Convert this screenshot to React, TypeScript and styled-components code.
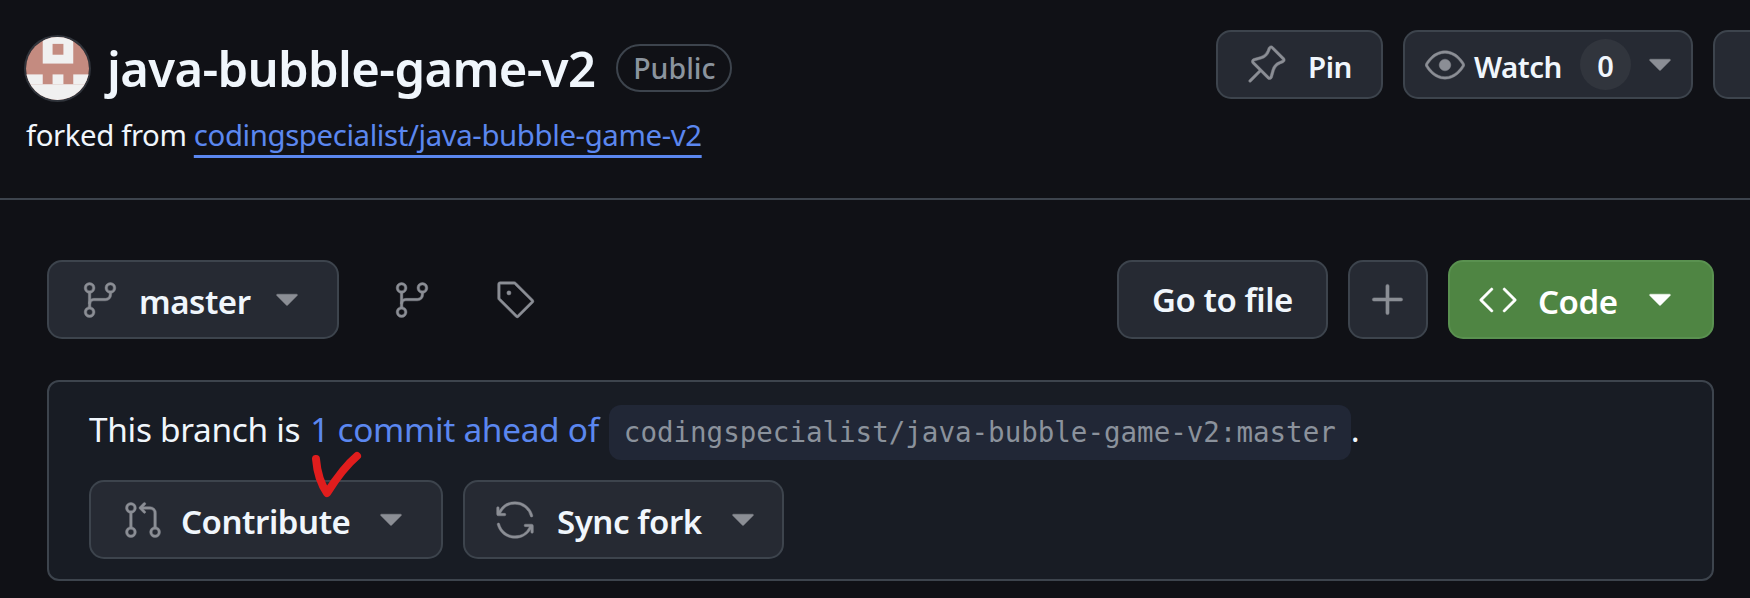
import React, { FC, ReactNode } from 'react'
import styled, { createGlobalStyle } from 'styled-components'
import {
  GoCode,
  GoEye,
  GoGitBranch,
  GoGitPullRequest,
  GoPin,
  GoPlus,
  GoSync,
  GoTag,
  GoTriangleDown,
} from 'react-icons/go'

const GlobalStyle = createGlobalStyle`
  html, body {
    margin: 0;
    padding: 0;
    width: 1750px;
    height: 598px;
    overflow: hidden;
    background: #101116;
  }
  body {
    font-family: "Noto Sans", "Liberation Sans", sans-serif;
    color: #f0f6fc;
  }
`

const Page = styled.div`
  width: 1750px;
  height: 598px;
  overflow: hidden;
`
const Header = styled.header`
  box-sizing: border-box;
  height: 200px;
  padding: 30px 0 0 26px;
  display: flex;
  justify-content: space-between;
  align-items: flex-start;
  border-bottom: 2px solid #3d444d;
`
const TitleBlock = styled.div`
  display: flex;
  flex-direction: column;
  gap: 12px;
  margin-top: 3px;
`
const TitleRow = styled.div`
  display: flex;
  align-items: center;
  height: 70px;
`
const Avatar = styled.svg`
  width: 63px;
  height: 63px;
  border-radius: 50%;
  box-shadow: 0 0 0 2px #30343b;
  margin-right: 18px;
`
const RepoName = styled.h1`
  margin: 0;
  font-size: 49px;
  font-weight: 600;
  letter-spacing: -0.65px;
  line-height: 70px;
  color: #f0f6fc;
`
const Visibility = styled.span`
  box-sizing: border-box;
  width: 116px;
  height: 48px;
  margin-left: 21px;
  display: flex;
  align-items: center;
  justify-content: center;
  border: 2px solid #3d444d;
  border-radius: 24px;
  font-size: 28.5px;
  font-weight: 500;
  color: #8b949e;
`
const ForkLine = styled.div`
  font-size: 29.4px;
  line-height: 40px;
  letter-spacing: -0.4px;
  color: #f0f6fc;
`
const Link = styled.a`
  color: #5b87ef;
  text-decoration: underline;
  text-decoration-thickness: 2.5px;
  text-decoration-skip-ink: none;
  text-underline-offset: 9px;
`
const HeaderActions = styled.div`
  display: flex;
  gap: 20px;
  flex-shrink: 0;
  width: 534px;
`
const Button = styled.button<{ $width: number; $pad?: number; $primary?: boolean }>`
  box-sizing: border-box;
  flex-shrink: 0;
  width: ${({ $width }) => $width}px;
  height: 69px;
  padding: 0 0 0 ${({ $pad = 0 }) => $pad}px;
  display: flex;
  align-items: center;
  border-radius: 15px;
  border: 2px solid ${({ $primary }) => ($primary ? '#5a9150' : '#3d444d')};
  background: ${({ $primary }) => ($primary ? '#4f8543' : '#262a33')};
  color: ${({ $primary }) => ($primary ? '#ffffff' : '#f0f6fc')};
  font-family: inherit;
  font-size: 29.5px;
  font-weight: 600;
  letter-spacing: -0.5px;
  white-space: nowrap;

  svg {
    flex-shrink: 0;
    color: ${({ $primary }) => ($primary ? '#ffffff' : '#8b8e95')};
    stroke: currentColor;
    stroke-width: 0.25;
  }
`
const TallButton = styled(Button)`
  height: 79px;
  font-size: 33px;
  letter-spacing: -0.45px;
`
const CenteredButton = styled(TallButton)`
  justify-content: center;
  padding: 0;
`
const Counter = styled.span`
  width: 51px;
  height: 50px;
  margin-left: 18px;
  border-radius: 50%;
  background: #31353d;
  display: flex;
  align-items: center;
  justify-content: center;
  font-size: 29px;
  padding-top: 1px;
`
const Label = styled.span<{ $left: number; $right: number }>`
  margin-left: ${({ $left }) => $left}px;
  margin-right: ${({ $right }) => $right}px;
  padding-top: 3px;
`
const MirroredPin = styled(GoPin)`
  transform: scaleX(-1);
`
const Toolbar = styled.div`
  box-sizing: border-box;
  height: 180px;
  padding: 60px 36px 0 47px;
  display: flex;
  align-items: flex-start;
  justify-content: space-between;
`
const ToolbarGroup = styled.div`
  display: flex;
  align-items: center;
`
const RightGroup = styled(ToolbarGroup)`
  gap: 20px;
`
const IconLink = styled.a<{ $left: number }>`
  margin-left: ${({ $left }) => $left}px;
  display: flex;
  color: #8b8e95;

  svg {
    stroke: currentColor;
    stroke-width: 0.25;
  }
`
const Panel = styled.section`
  box-sizing: border-box;
  width: 1667px;
  height: 201px;
  margin-left: 47px;
  padding: 23px 40px 0;
  background: #181c24;
  border: 2px solid #3d444d;
  border-radius: 12px;
`
const AheadLine = styled.div`
  height: 55px;
  display: flex;
  align-items: flex-start;
  font-size: 33.4px;
  line-height: 49px;
  letter-spacing: -0.3px;
  white-space: nowrap;
  color: #f0f6fc;
`
const AheadLink = styled.a`
  margin: 0 10px;
  color: #5b87ef;
`
const Ref = styled.code`
  box-sizing: border-box;
  height: 55px;
  padding: 0 15px;
  display: flex;
  align-items: center;
  background: #212736;
  border-radius: 12px;
  font-family: "DejaVu Sans Mono", "Liberation Mono", monospace;
  font-size: 27.5px;
  letter-spacing: 0;
  color: #8b929c;
`
const PanelActions = styled.div`
  position: relative;
  display: flex;
  gap: 20px;
  margin-top: 20px;
`
const CheckMark = styled.svg`
  position: absolute;
  left: 216px;
  top: -29px;
  width: 60px;
  height: 50px;
`

const Caret: FC<{ left: number }> = ({ left }) => (
  <GoTriangleDown size={40} style={{ marginLeft: left }} />
)

const Identicon: FC = () => (
  <Avatar viewBox="0 0 64 64">
    <rect width="64" height="64" fill="#c48b80" />
    <rect x="17" width="31" height="27" fill="#f0f0f0" />
    <rect x="27" y="7" width="11" height="11" fill="#c48b80" />
    <rect y="38" width="17" height="10" fill="#f0f0f0" />
    <rect x="27" y="38" width="11" height="10" fill="#f0f0f0" />
    <rect x="48" y="38" width="16" height="10" fill="#f0f0f0" />
    <rect y="48" width="64" height="16" fill="#f0f0f0" />
  </Avatar>
)

type ActionProps = { icon: ReactNode; width: number; pad: number; left: number; right: number; text: string }

const PanelButton: FC<ActionProps> = ({ icon, width, pad, left, right, text }) => (
  <TallButton $width={width} $pad={pad}>
    {icon}
    <Label $left={left} $right={right}>{text}</Label>
    <Caret left={0} />
  </TallButton>
)

export default function App() {
  return (
    <Page>
      <GlobalStyle />
      <Header>
        <TitleBlock>
          <TitleRow>
            <Identicon />
            <RepoName>java-bubble-game-v2</RepoName>
            <Visibility>Public</Visibility>
          </TitleRow>
          <ForkLine>
            forked from <Link>codingspecialist/java-bubble-game-v2</Link>
          </ForkLine>
        </TitleBlock>
        <HeaderActions>
          <Button $width={167} $pad={27}>
            <MirroredPin size={42} />
            <Label $left={21} $right={0}>Pin</Label>
          </Button>
          <Button $width={290} $pad={20}>
            <GoEye size={40} />
            <Label $left={9} $right={0}>Watch</Label>
            <Counter>0</Counter>
            <Caret left={9} />
          </Button>
          <Button $width={100} />
        </HeaderActions>
      </Header>
      <Toolbar>
        <ToolbarGroup>
          <TallButton $width={292} $pad={31}>
            <GoGitBranch size={40} />
            <Label $left={19} $right={16}>master</Label>
            <Caret left={0} />
          </TallButton>
          <IconLink $left={53}><GoGitBranch size={40} /></IconLink>
          <IconLink $left={64}><GoTag size={40} /></IconLink>
        </ToolbarGroup>
        <RightGroup>
          <CenteredButton $width={211}>Go to file</CenteredButton>
          <CenteredButton $width={80}><GoPlus size={50} /></CenteredButton>
          <TallButton $width={266} $pad={28} $primary>
            <GoCode size={40} />
            <Label $left={20} $right={22}>Code</Label>
            <Caret left={0} />
          </TallButton>
        </RightGroup>
      </Toolbar>
      <Panel>
        <AheadLine>
          This branch is
          <AheadLink>1 commit ahead of</AheadLink>
          <Ref>codingspecialist/java-bubble-game-v2:master</Ref>
          .
        </AheadLine>
        <PanelActions>
          <PanelButton icon={<GoGitPullRequest size={40} />} width={354} pad={32} left={18} right={21} text="Contribute" />
          <PanelButton icon={<GoSync size={40} />} width={321} pad={30} left={22} right={21} text="Sync fork" />
          <CheckMark viewBox="0 0 60 50">
            <path
              d="M11 8 C12 20 15 32 22 42 C29 31 40 15 52 5"
              fill="none"
              stroke="#e11d1d"
              strokeWidth="8"
              strokeLinecap="round"
              strokeLinejoin="round"
            />
          </CheckMark>
        </PanelActions>
      </Panel>
    </Page>
  )
}
